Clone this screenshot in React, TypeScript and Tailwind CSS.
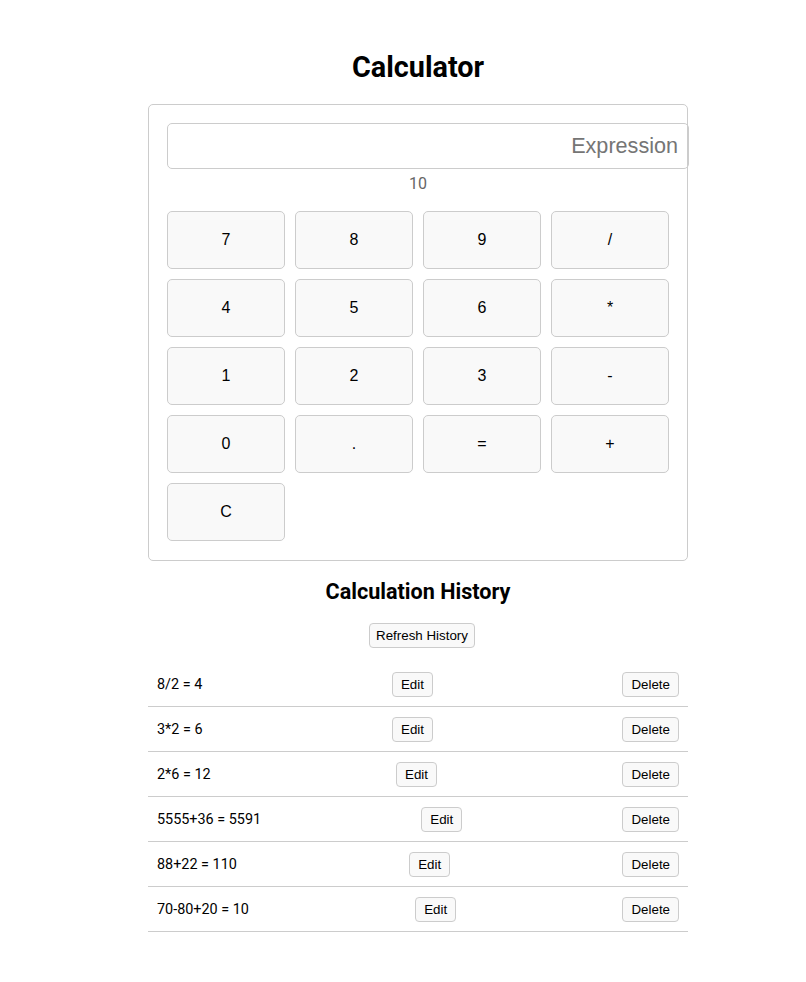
import { useState } from 'react';

const keys = ['7', '8', '9', '/', '4', '5', '6', '*', '1', '2', '3', '-', '0', '.', '=', '+', 'C'];

const initialHistory = [
  { id: 1, expr: '8/2', result: '4' },
  { id: 2, expr: '3*2', result: '6' },
  { id: 3, expr: '2*6', result: '12' },
  { id: 4, expr: '5555+36', result: '5591' },
  { id: 5, expr: '88+22', result: '110' },
  { id: 6, expr: '70-80+20', result: '10' },
];

export default function App() {
  const [expression, setExpression] = useState('');
  const [history, setHistory] = useState(initialHistory);

  return (
    <div className="min-h-screen bg-white text-black text-[14.4px] font-['Roboto',sans-serif] flex justify-center pl-[30px]">
      <div className="w-[540px] pt-[50px] pb-[50px]">
        <h1 className="text-center text-[28.8px] leading-[34px] font-bold mb-[20px]">Calculator</h1>

        {/* Calculator card */}
        <div className="border border-[#cccccc] rounded-[5px] px-[18px] pt-[18px] pb-[19px]">
          <input
            value={expression}
            onChange={(e) => setExpression(e.target.value)}
            placeholder="Expression"
            className="w-[522px] h-[46px] px-[10px] border border-[#cccccc] rounded-[5px] text-right text-[21.6px] font-['Liberation_Sans',Arial,sans-serif] placeholder:text-[#757575] outline-none"
          />
          <div className="mt-[3px] h-[24px] leading-[24px] mb-[15px] text-center text-[16px] text-[#666666]">10</div>
          <div className="grid grid-cols-4 gap-[10px]">
            {keys.map((k) => (
              <button
                key={k}
                className="h-[58px] bg-[#f9f9f9] border border-[#cccccc] rounded-[5px] text-[16px] text-black font-['Liberation_Sans',Arial,sans-serif]"
              >
                {k}
              </button>
            ))}
          </div>
        </div>

        <h2 className="mt-[18px] text-center text-[21.6px] leading-[26px] font-bold">Calculation History</h2>
        <div className="mt-[18px] flex justify-center">
          <button className="ml-[8px] h-[25px] px-[6px] bg-[#f9f9f9] border border-[#cccccc] rounded-[4px] text-[13.33px] font-['Liberation_Sans',Arial,sans-serif]">
            Refresh History
          </button>
        </div>

        <ul className="mt-[14px]">
          {history.map((h) => (
            <li
              key={h.id}
              className="flex items-center justify-between pt-[10px] pb-[9px] px-[9px] border-b border-[#cccccc]"
            >
              <span>
                {h.expr} = {h.result}
              </span>
              <button className="h-[25px] px-[8px] bg-[#f9f9f9] border border-[#cccccc] rounded-[4px] text-[13.33px] font-['Liberation_Sans',Arial,sans-serif]">
                Edit
              </button>
              <button
                onClick={() => setHistory(history.filter((x) => x.id !== h.id))}
                className="h-[25px] px-[8px] bg-[#f9f9f9] border border-[#cccccc] rounded-[4px] text-[13.33px] font-['Liberation_Sans',Arial,sans-serif]"
              >
                Delete
              </button>
            </li>
          ))}
        </ul>
      </div>
    </div>
  );
}
